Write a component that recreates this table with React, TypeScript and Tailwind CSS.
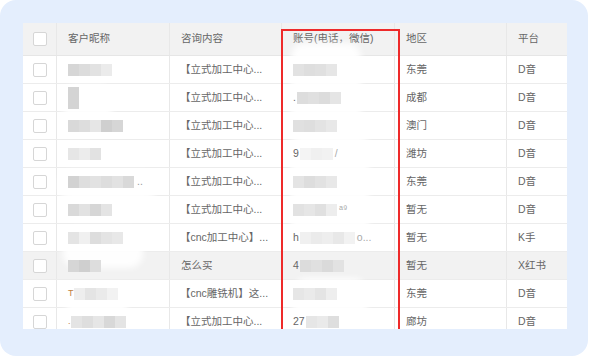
import React from "react";

type Row = {
  nick: string[]; // mosaic shades
  nickPrefix?: string;
  nickSuffix?: string;
  tall?: boolean;
  content: string;
  acctPrefix?: string;
  acct: string[];
  acctSuffix?: string;
  region: string;
  platform: string;
  active?: boolean;
};

const ROWS: Row[] = [
  { nick: ["#d6d6d6", "#dcdcdc", "#e2e2e2", "#ebebeb"], content: "【立式加工中心...", acct: ["#e2e2e2", "#dedede", "#e0e0e0", "#e6e6e6"], region: "东莞", platform: "D音" },
  { nick: ["#d4d4d4"], tall: true, content: "【立式加工中心...", acctPrefix: ".", acct: ["#dddddd", "#e0e0e0", "#dcdcdc", "#e5e5e5"], region: "成都", platform: "D音" },
  { nick: ["#d9d9d9", "#dddddd", "#e6e6e6", "#cfcfcf", "#d6d6d6"], content: "【立式加工中心...", acct: ["#e0e0e0", "#dedede", "#e3e3e3", "#e8e8e8"], region: "澳门", platform: "D音" },
  { nick: ["#e6e6e6", "#ececec", "#e2e2e2"], content: "【立式加工中心...", acctPrefix: "9", acct: ["#f4f4f4", "#f0f0f0", "#f2f2f2"], acctSuffix: "/", region: "潍坊", platform: "D音" },
  { nick: ["#d2d2d2", "#dedede", "#e2e2e2", "#dddddd", "#e2e2e2", "#d9d9d9"], nickSuffix: "..", content: "【立式加工中心...", acct: ["#e4e4e4", "#dddddd", "#e2e2e2", "#e8e8e8"], region: "东莞", platform: "D音" },
  { nick: ["#d9d9d9", "#e2e2e2", "#d6d6d6", "#e4e4e4"], content: "【立式加工中心...", acct: ["#e2e2e2", "#e6e6e6", "#e0e0e0", "#ededed"], acctSuffix: "ᵃ⁹", region: "暂无", platform: "D音" },
  { nick: ["#e4e4e4", "#f0f0f0", "#dddddd", "#e4e4e4", "#e8e8e8"], content: "【cnc加工中心】...", acctPrefix: "h", acct: ["#f0f0f0", "#ebebeb", "#eeeeee", "#e8e8e8", "#f2f2f2"], acctSuffix: "o...", region: "暂无", platform: "K手" },
  { nick: ["#d6d6d6", "#cfcfcf", "#dddddd"], content: "怎么买", acctPrefix: "4", acct: ["#dcdcdc", "#e0e0e0", "#dadada", "#e2e2e2"], region: "暂无", platform: "X红书", active: true },
  { nick: ["#eeeeee", "#e4e4e4", "#eaeaea", "#f2f2f2"], nickPrefix: "T", content: "【cnc雕铣机】这...", acct: ["#e6e6e6", "#eaeaea", "#e4e4e4", "#eeeeee"], region: "东莞", platform: "D音" },
  { nick: ["#e4e4e4", "#dedede", "#e6e6e6", "#d8d8d8", "#e4e4e4"], nickPrefix: ".", content: "【立式加工中心...", acctPrefix: "27", acct: ["#e6e6e6", "#eaeaea", "#dedede"], region: "廊坊", platform: "D音" },
];

const COLS = "grid grid-cols-[34px_113px_112px_113px_112px_60px]";

function Checkbox() {
  return <div className="w-[14px] h-[14px] rounded-[2px] border border-[#d6d6d6] bg-white" />;
}

function Mosaic({ shades, tall }: { shades: string[]; tall?: boolean }) {
  return (
    <div className="relative z-[2] flex blur-[0.5px]">
      {shades.map((c, i) => (
        <div
          key={i}
          className={tall ? "w-[11px] h-[22px]" : "w-[11px] h-[12px]"}
          style={{ backgroundColor: c }}
        />
      ))}
    </div>
  );
}

function Cell({ children, last }: { children?: React.ReactNode; last?: boolean }) {
  return (
    <div className={`flex items-center px-[11px] overflow-hidden whitespace-nowrap ${last ? "" : "border-r border-[#e8e8e8]"}`}>
      {children}
    </div>
  );
}

// white smear marks left by the blurring tool
const SMEARS = [
  "left-[40px] top-[62px] w-[50px] h-[36px]",
  "left-[36px] top-[148px] w-[98px] h-[30px]",
  "left-[40px] top-[205px] w-[80px] h-[40px]",
  "left-[44px] top-[262px] w-[60px] h-[40px]",
  "left-[268px] top-[20px] w-[70px] h-[90px]",
  "left-[268px] top-[110px] w-[78px] h-[110px]",
  "left-[270px] top-[255px] w-[74px] h-[55px]",
];

export default function App() {
  return (
    <div className="w-[590px] h-[358px] bg-white" style={{ fontFamily: '"Liberation Sans", "Noto Sans CJK SC", sans-serif' }}>
      <div className="w-[588px] h-[356px] rounded-[16px] bg-[#e4eefd] pt-[23px] pl-[23px]">
        <div className="relative w-[544px] h-[306px] overflow-hidden bg-white text-[10.5px] text-[#666]">
          <div className={`${COLS} h-[33px] bg-[#f2f2f2] border-b border-[#e6e6e6]`}>
            <div className="flex items-center justify-center border-r border-[#e8e8e8]">
              <Checkbox />
            </div>
            <Cell>客户昵称</Cell>
            <Cell>咨询内容</Cell>
            <Cell>账号(电话，微信)</Cell>
            <Cell>地区</Cell>
            <Cell last>平台</Cell>
          </div>
          {ROWS.map((r, i) => (
            <div
              key={i}
              className={`${COLS} h-[28px] border-b border-[#ececec] ${r.active ? "bg-[#f2f2f2]" : "bg-white"}`}
            >
              <div className="flex items-center justify-center border-r border-[#e8e8e8]">
                <Checkbox />
              </div>
              <Cell>
                {r.nickPrefix && <span className="relative z-[2] text-[#c08040] text-[9px]">{r.nickPrefix}</span>}
                <Mosaic shades={r.nick} tall={r.tall} />
                {r.nickSuffix && <span className="relative z-[2] ml-[3px] text-[#999]">{r.nickSuffix}</span>}
              </Cell>
              <Cell>
                <span className={r.content.startsWith("【") ? "-ml-[1px]" : ""}>{r.content}</span>
              </Cell>
              <Cell>
                {r.acctPrefix && <span className="relative z-[2] mr-[1px]">{r.acctPrefix}</span>}
                <Mosaic shades={r.acct} />
                {r.acctSuffix && <span className="relative z-[2] ml-[2px] text-[#aaa]">{r.acctSuffix}</span>}
              </Cell>
              <Cell>{r.region}</Cell>
              <Cell last>{r.platform}</Cell>
            </div>
          ))}
          {SMEARS.map((c) => (
            <div key={c} className={`absolute z-[1] ${c} rounded-[14px] bg-white/90 blur-[3px] pointer-events-none`} />
          ))}
          <div className="absolute z-[3] left-[258px] top-[6px] w-[119px] h-[320px] border-2 border-[#ee2a2a] pointer-events-none" />
        </div>
      </div>
    </div>
  );
}
